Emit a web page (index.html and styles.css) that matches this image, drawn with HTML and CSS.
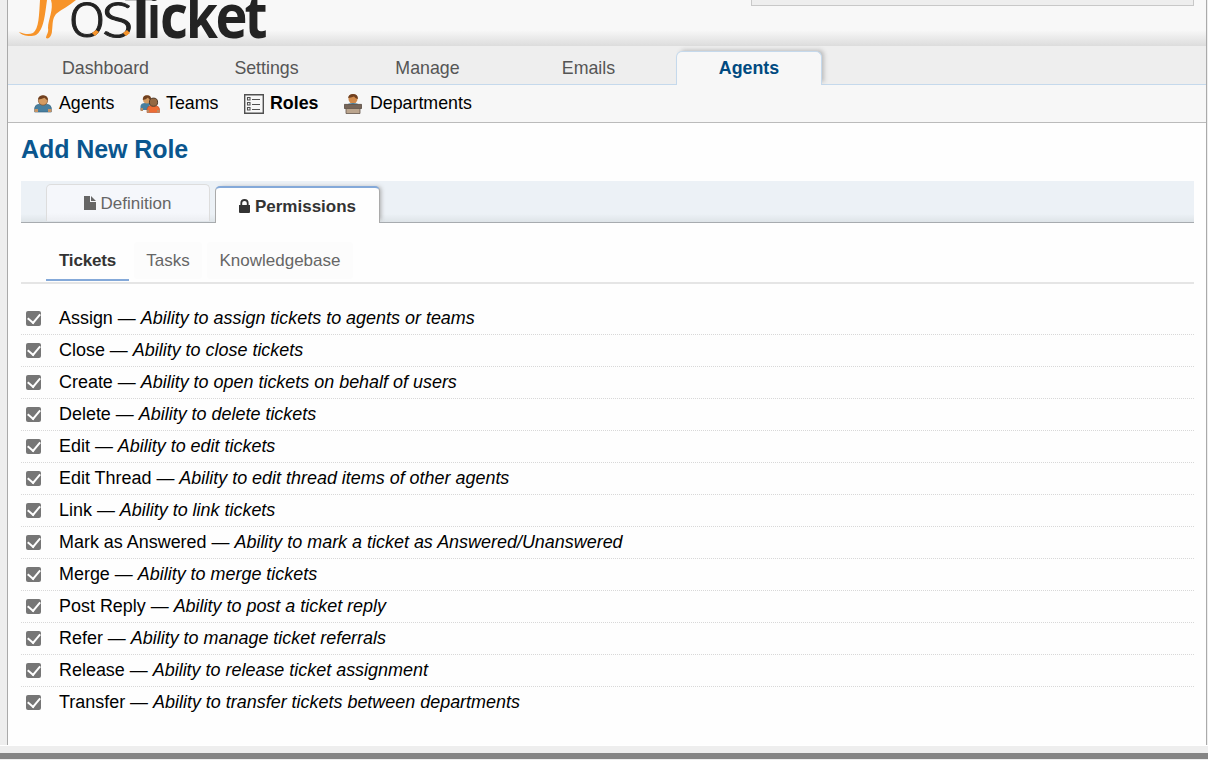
FILE: index.html
```html
<!DOCTYPE html>
<html lang="en">
<head>
<meta charset="utf-8">
<title>Add New Role</title>
<link rel="stylesheet" href="styles.css">
</head>
<body>
<div class="container">
  <header class="header">
    <svg class="logo" width="262" height="45" viewBox="8 0 262 45" role="img" aria-label="osTicket">
      <path class="kite" d="M40 0C39 15 39 29 33 33C29 35 24 34 19 32C22 36 31 37 36 35C44 30 45 14 47 0Z"/>
      <path class="kite" d="M51 0C54 9 48 20 48 28C49 33 46 35 46 38C49 40 52 35 52 31C53 24 52 19 56 14C62 9 69 6 76 0Z"/>
      <text class="logo-os" x="68.500" y="37" textLength="37" lengthAdjust="spacingAndGlyphs">o</text>
      <text class="logo-os" x="101" y="37" textLength="33" lengthAdjust="spacingAndGlyphs">s</text>
      <text class="logo-ticket logo-cap" x="124" y="38" textLength="34" lengthAdjust="spacingAndGlyphs">T</text>
      <text class="logo-ticket" x="147" y="38" textLength="14" lengthAdjust="spacingAndGlyphs">i</text>
      <text class="logo-ticket" x="160" y="38" textLength="28" lengthAdjust="spacingAndGlyphs">c</text>
      <text class="logo-ticket" x="186" y="38" textLength="32" lengthAdjust="spacingAndGlyphs">k</text>
      <text class="logo-ticket" x="215.500" y="38" textLength="32" lengthAdjust="spacingAndGlyphs">e</text>
      <text class="logo-ticket" x="244.500" y="38" textLength="23" lengthAdjust="spacingAndGlyphs">t</text>
      <path class="kite" d="M92 33L96 30L99 32L95 36ZM123 33L127 30L130 33L126 36Z"/>
    </svg>
    <div class="info"></div>
  </header>
  <nav class="nav">
    <a class="tab">Dashboard</a><a class="tab">Settings</a><a class="tab">Manage</a><a class="tab">Emails</a><a class="tab active">Agents</a>
  </nav>
  <nav class="subnav">
    <a class="sub agents"><svg width="18" height="18" viewBox="0 0 18 18"><path fill="#477f9f" stroke="#386681" stroke-width=".7" d="M.7 17V13Q1 9.7 5 9.2H13Q17 9.7 17.3 13V17Z"/><path fill="#c99464" d="M.5 14H4V17H.5ZM14 14H17.5V17H14Z"/><circle cx="9" cy="5.6" r="4.6" fill="#d49b61" stroke="#805029" stroke-width=".7"/><path fill="#70401f" d="M4.2 5.5Q3.5.5 9 .2Q14.6.5 13.8 5.6Q12 4.4 10.500 2.8Q7 4.400 4.200 4.500Z"/></svg><span>Agents</span></a>
    <a class="sub teams"><svg width="20" height="18" viewBox="0 0 20 18"><path fill="#477f9f" d="M.5 15V11Q1 8 5 8H10L9 15Z"/><circle cx="7" cy="4.6" r="4" fill="#d49b61"/><path fill="#70401f" d="M2.8 5Q2.5.2 7 .2Q11.7.2 11 5Q8.8 4.5 8 2.5Q6 4.8 2.8 5Z"/><path fill="#ed6c34" stroke="#b94822" stroke-width=".6" d="M7 17.5V14Q7.5 11 11 10.5H15.5Q19 11 19.5 14V17.5Z"/><path fill="#b98b62" d="M.5 13H3V16H.5ZM7 15H9V17.5H7ZM17 15H19.5V17.5H17Z"/><circle cx="13.5" cy="7.2" r="4.1" fill="#946842" stroke="#503c2c"/></svg><span>Teams</span></a>
    <a class="sub roles"><svg width="20" height="20" viewBox="0 0 20 20" fill="none" stroke="#505050"><path stroke-width="1.4" d="M.7.7H19.3V19.3H.7Z"/><path stroke-width="1.1" d="M3.5 3.5H6V6H3.5ZM3.5 8.5H6V11H3.5ZM3.5 13.5H6V16H3.5ZM8 5.5H16M8 10.5H16M8 15.5H16"/></svg><span>Roles</span></a>
    <a class="sub depts"><svg width="18" height="20" viewBox="0 0 18 20"><circle cx="9" cy="5" r="4.5" fill="#d18b4c"/><path fill="#70401f" d="M4 5Q4 0 9 0Q14 0 14 5Q11.500 4.500 10 2.500Q7 3.800 4 4Z"/><path fill="#477f9f" d="M4 10.500Q4 9 9 9Q14 9 14 10.500Z"/><path fill="#766558" stroke="#54473d" stroke-width=".8" d="M.4 10.4H17.6V14.5H.4Z"/><path fill="#bba58e" stroke="#65574b" stroke-width=".8" d="M2 14.5H16V19.5H2Z"/></svg><span>Departments</span></a>
  </nav>
  <main class="content">
    <h2 class="title">Add New Role</h2>
    <div class="tabs">
      <a class="card definition"><svg width="12" height="14" viewBox="0 0 12 14"><path fill="#666" d="M0 0H6V6H12V14H0ZM7 0L12 5H7Z"/></svg><span>Definition</span></a>
      <a class="card permissions"><svg width="11" height="14" viewBox="0 0 11 14"><path fill="#333" d="M0 6H11V13Q11 14 10 14H1Q0 14 0 13Z"/><path fill="none" stroke="#333" stroke-width="1.8" d="M2.3 7V4Q2.3 1 5.5 1Q8.7 1 8.7 4V7"/></svg><span>Permissions</span></a>
    </div>
    <div class="pills"><a class="pill current">Tickets</a><a class="pill tasks">Tasks</a><a class="pill kb">Knowledgebase</a></div>
    <div class="list">
      <label class="row"><span class="check"></span><span>Assign — <em>Ability to assign tickets to agents or teams</em></span></label>
      <label class="row"><span class="check"></span><span>Close — <em>Ability to close tickets</em></span></label>
      <label class="row"><span class="check"></span><span>Create — <em>Ability to open tickets on behalf of users</em></span></label>
      <label class="row"><span class="check"></span><span>Delete — <em>Ability to delete tickets</em></span></label>
      <label class="row"><span class="check"></span><span>Edit — <em>Ability to edit tickets</em></span></label>
      <label class="row"><span class="check"></span><span>Edit Thread — <em>Ability to edit thread items of other agents</em></span></label>
      <label class="row"><span class="check"></span><span>Link — <em>Ability to link tickets</em></span></label>
      <label class="row"><span class="check"></span><span>Mark as Answered — <em>Ability to mark a ticket as Answered/Unanswered</em></span></label>
      <label class="row"><span class="check"></span><span>Merge — <em>Ability to merge tickets</em></span></label>
      <label class="row"><span class="check"></span><span>Post Reply — <em>Ability to post a ticket reply</em></span></label>
      <label class="row"><span class="check"></span><span>Refer — <em>Ability to manage ticket referrals</em></span></label>
      <label class="row"><span class="check"></span><span>Release — <em>Ability to release ticket assignment</em></span></label>
      <label class="row"><span class="check"></span><span>Transfer — <em>Ability to transfer tickets between departments</em></span></label>
    </div>
  </main>
</div>
<div class="bottom"></div>
</body>
</html>
```
FILE: styles.css
```css
* { box-sizing: border-box; }
body { margin: 0; height: 760px; overflow: hidden; background: #eee; font: 18px/20px "Liberation Sans", Arial, sans-serif; color: #000; }
.container { width: 1200px; height: 745px; margin-left: 7px; background: #fefefe; border: solid #aaa; border-width: 0 1px; }
.header { height: 46px; display: flex; justify-content: space-between; background: linear-gradient(#f8f8f8 0 30px, #dedede 45px); border-bottom: 1px solid #ddd; }
.logo { display: block; }
.kite { fill: #f7942a; }
.logo-os { font: 300 68px Lato, sans-serif; fill: #232323; stroke: #232323; stroke-width: 1px; }
.logo-ticket { font: 700 60px "Open Sans", sans-serif; fill: #232323; }
.logo-cap { font-size: 65px; }
.info { width: 443px; height: 6px; margin-right: 12px; background: #eee; border: 1px solid #c8c8c8; border-top: 0; }
.nav { height: 39px; display: flex; gap: 15px; padding: 5px 0 0 24px; border-bottom: 1px solid #c5d9ec; background: #eee; }
.tab { width: 146px; height: 33px; padding: 7px 0 0 1px; text-align: center; color: #555; font-size: 17.8px; }
.tab.active { height: 34px; padding: 6px 0 0; background: #f7f7f7; border: 1px solid #c5d9ec; border-bottom: 0; border-radius: 6px 6px 0 0; box-shadow: 3px -2px 4px -1px #bbb; clip-path: inset(-8px -8px 0 -8px); color: #004a80; font-weight: bold; }
.subnav { height: 38px; display: flex; padding: 0 26px; background: #f7f7f7; border-bottom: 1px solid #bbb; }
.sub { display: flex; align-items: center; padding-bottom: 1px; font-size: 17.8px; }
.sub svg { margin-top: 2px; }
.agents { width: 106px; gap: 7px; }
.teams { width: 104px; gap: 6px; }
.roles { width: 100px; gap: 6px; font-weight: bold; }
.depts { gap: 8px; }
.content { padding: 13px 12px 0 13px; }
.title { margin: 0 0 18px; font-size: 25px; line-height: 27px; letter-spacing: -.08px; color: #0a568e; }
.tabs { height: 42px; display: flex; align-items: flex-start; padding: 3px 0 0 25px; gap: 5px; background: linear-gradient(#ecf1f6 0 33px, #dce2e6 42px); border-bottom: 1px solid #a7abaf; font-size: 17px; }
.card { display: flex; align-items: center; justify-content: center; border-radius: 5px 5px 0 0; }
.definition { width: 164px; height: 37px; padding-top: 1px; gap: 5px; background: linear-gradient(#f5f7fb 28px, #eceef2); border: 1px solid #ddd; border-bottom: 0; color: #666; }
.definition svg { margin: -1px 0 0 -1px; }
.permissions { width: 165px; height: 37px; margin-top: 2px; padding-top: 2px; gap: 5px; background: #fefefe; border: 1px solid #aaa; border-top: 2px solid #84a9d9; border-bottom: 0; box-shadow: 3px -1px 4px -2px #aaa; clip-path: inset(-6px -8px 0 -6px); color: #333; font-weight: bold; }
.permissions svg { margin-top: -2px; }
.pills { height: 61px; display: flex; align-items: flex-start; padding: 19px 0 0 25px; gap: 5px; border-bottom: 2px solid #e5e5e5; font-size: 17px; }
.pill { height: 37px; padding-top: 9px; text-align: center; color: #666; background: #fcfcfc; border-radius: 4px; }
.current { width: 83px; height: 39px; background: none; border-bottom: 2px solid #84a9d9; border-radius: 0; color: #333; font-weight: bold; letter-spacing: -.15px; }
.tasks { width: 68px; }
.kb { width: 146px; }
.list { padding-top: 19px; }
.row { height: 32px; display: flex; align-items: center; padding: 0 0 2px 5px; gap: 18px; border-bottom: 1px dotted #d8d8d8; font-size: 17.94px; }
.check { width: 15px; height: 15px; display: flex; justify-content: center; padding-top: 2px; margin-top: 1px; background: #767676; border-radius: 2px; }
.row:last-child { border-bottom-color: transparent; }
.check::before { content: ""; width: 6px; height: 10px; margin-top: -1.5px; border: solid white; border-width: 0 2px 2px 0; transform: rotate(40deg); }
.bottom { height: 15px; border-top: 1px solid #fff; border-bottom: 1px solid #eee; background: linear-gradient(#eee 0 7px, #858585 7px); }
```
